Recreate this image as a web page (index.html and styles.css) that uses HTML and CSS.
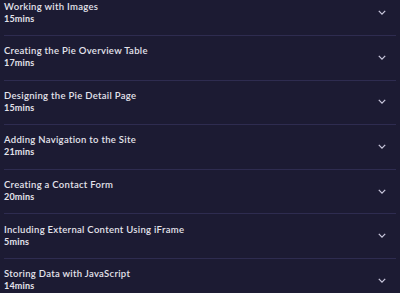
FILE: index.html
```html
<!DOCTYPE html>
<html lang="en">
<head>
  <meta charset="UTF-8">
  <meta name="viewport" content="width=device-width, initial-scale=1.0">
  <title>Course Lessons</title>
  <link rel="stylesheet" href="styles.css">
</head>
<body>
  <ul class="lessons">
    <li class="lesson">
      <div class="lesson-info">
        <p class="lesson-title">Working with Images</p>
        <p class="lesson-time">15mins</p>
      </div>
      <svg class="chevron" viewBox="0 0 10 6"><path d="M1 1l4 4 4-4"/></svg>
    </li>
    <li class="lesson">
      <div class="lesson-info">
        <p class="lesson-title">Creating the Pie Overview Table</p>
        <p class="lesson-time">17mins</p>
      </div>
      <svg class="chevron" viewBox="0 0 10 6"><path d="M1 1l4 4 4-4"/></svg>
    </li>
    <li class="lesson">
      <div class="lesson-info">
        <p class="lesson-title">Designing the Pie Detail Page</p>
        <p class="lesson-time">15mins</p>
      </div>
      <svg class="chevron" viewBox="0 0 10 6"><path d="M1 1l4 4 4-4"/></svg>
    </li>
    <li class="lesson">
      <div class="lesson-info">
        <p class="lesson-title">Adding Navigation to the Site</p>
        <p class="lesson-time">21mins</p>
      </div>
      <svg class="chevron" viewBox="0 0 10 6"><path d="M1 1l4 4 4-4"/></svg>
    </li>
    <li class="lesson">
      <div class="lesson-info">
        <p class="lesson-title">Creating a Contact Form</p>
        <p class="lesson-time">20mins</p>
      </div>
      <svg class="chevron" viewBox="0 0 10 6"><path d="M1 1l4 4 4-4"/></svg>
    </li>
    <li class="lesson">
      <div class="lesson-info">
        <p class="lesson-title">Including External Content Using iFrame</p>
        <p class="lesson-time">5mins</p>
      </div>
      <svg class="chevron" viewBox="0 0 10 6"><path d="M1 1l4 4 4-4"/></svg>
    </li>
    <li class="lesson">
      <div class="lesson-info">
        <p class="lesson-title">Storing Data with JavaScript</p>
        <p class="lesson-time">14mins</p>
      </div>
      <svg class="chevron" viewBox="0 0 10 6"><path d="M1 1l4 4 4-4"/></svg>
    </li>
  </ul>
</body>
</html>
```

FILE: styles.css
```css
* {
  margin: 0;
  padding: 0;
  box-sizing: border-box;
}

body {
  font-family: Lato, "Liberation Sans", sans-serif;
  background-color: #1c1b33;
  color: #e4e3ec;
  overflow: hidden;
}

.lessons {
  list-style: none;
  padding: 0 4px;
  margin-top: -9.6px;
}

.lesson {
  display: flex;
  align-items: center;
  justify-content: space-between;
  height: 44.6px;
  padding: 9.4px 0 10.2px;
  border-top: 1px solid #2e2c50;
}

.lesson-title {
  font-size: 9.5px;
  line-height: 12px;
  font-weight: 600;
  letter-spacing: 0.3px;
}

.lesson-time {
  font-size: 9px;
  line-height: 12.4px;
  font-weight: 700;
  letter-spacing: 0.2px;
}

.chevron {
  width: 8px;
  height: 5px;
  margin-right: 10px;
  fill: none;
  stroke: #c9c7dc;
  stroke-width: 1.6;
}
```
